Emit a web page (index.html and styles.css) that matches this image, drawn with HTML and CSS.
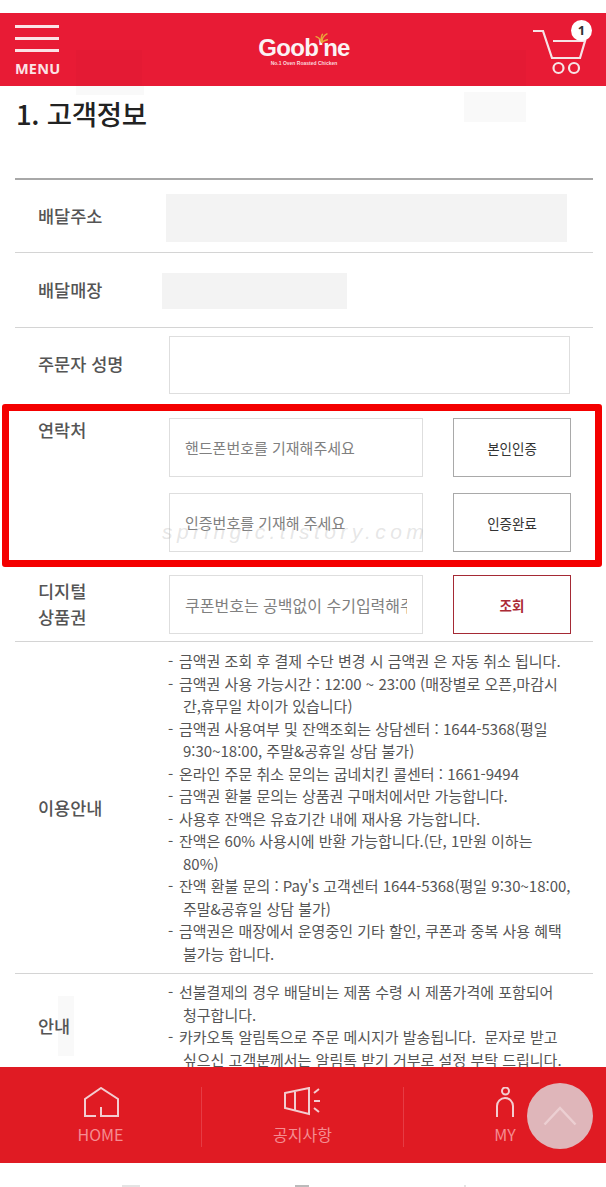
FILE: index.html
```html
<!DOCTYPE html>
<html lang="ko">
<head>
<meta charset="utf-8">
<title>Goobne</title>
<link rel="stylesheet" href="styles.css">
</head>
<body>
<div class="page">
  <span class="ghost ghost-a"></span>
  <span class="ghost ghost-b"></span>
  <span class="ghost ghost-c"></span>
  <header class="topbar">
    <span class="shade shade-a"></span>
    <span class="shade shade-b"></span>
    <div class="menu">
      <span class="bar"></span><span class="bar"></span><span class="bar"></span>
      <span class="menu-label">MENU</span>
    </div>
    <div class="logo">
      <svg class="leaf" width="13" height="10" viewBox="0 0 14 11"><path d="M7 10.5C6 7 4 5 1 4M7 10.5C7.500 6 9 3 13 1M7 8C6.500 5.500 7 3 8 1.500M7 10.500C9 9 11 8 13.500 7.500" fill="none" stroke="#e8a53a" stroke-width="1.600" stroke-linecap="round"/></svg>
      <span class="logo-name">Goob<span class="logo-i">'</span>ne</span>
      <span class="logo-sub">No.1 Oven Roasted Chicken</span>
    </div>
    <div class="cart">
      <svg width="56" height="56" viewBox="0 0 56 56"><path d="M0 9H10L19 36H47L52 19H20" fill="none" stroke="#f6e4e6" stroke-width="2.200"/><circle cx="25.500" cy="46" r="5" fill="none" stroke="#f6e4e6" stroke-width="2.200"/><circle cx="41" cy="46" r="5" fill="none" stroke="#f6e4e6" stroke-width="2.200"/></svg>
      <span class="badge">1</span>
    </div>
  </header>

  <main class="content">
    <h1 class="title">1. 고객정보</h1>
    <section class="form">
      <div class="row row-addr">
        <div class="label">배달주소</div>
        <div class="mask mask-addr"></div>
      </div>
      <div class="row row-store">
        <div class="label">배달매장</div>
        <div class="mask mask-store"></div>
      </div>
      <div class="row row-name">
        <div class="label">주문자 성명</div>
        <input class="field field-full" type="text">
      </div>
      <div class="row row-contact">
        <div class="label label-top">연락처</div>
        <div class="stack">
          <div class="pair">
            <input class="field" type="text" placeholder="핸드폰번호를 기재해주세요">
            <button class="btn" type="button">본인인증</button>
          </div>
          <div class="pair">
            <input class="field" type="text" placeholder="인증번호를 기재해 주세요">
            <button class="btn" type="button">인증완료</button>
          </div>
        </div>
      </div>
      <div class="row row-coupon">
        <div class="label label-two">디지털<br>상품권</div>
        <div class="pair">
          <input class="field field-lg" type="text" placeholder="쿠폰번호는 공백없이 수기입력해주세요">
          <button class="btn btn-red" type="button">조회</button>
        </div>
      </div>
      <div class="row row-info">
        <div class="label">이용안내</div>
        <ul class="notes">
          <li>금액권 조회 후 결제 수단 변경 시 금액권 은 자동 취소 됩니다.</li>
          <li>금액권 사용 가능시간 : 12:00 ~ 23:00 (매장별로 오픈,마감시간,휴무일 차이가 있습니다)</li>
          <li>금액권 사용여부 및 잔액조회는 상담센터 : 1644-5368(평일 9:30~18:00, 주말&amp;공휴일 상담 불가)</li>
          <li>온라인 주문 취소 문의는 굽네치킨 콜센터 : 1661-9494</li>
          <li>금액권 환불 문의는 상품권 구매처에서만 가능합니다.</li>
          <li>사용후 잔액은 유효기간 내에 재사용 가능합니다.</li>
          <li>잔액은 60% 사용시에 반환 가능합니다.(단, 1만원 이하는 80%)</li>
          <li>잔액 환불 문의 : Pay's 고객센터 1644-5368(평일 9:30~18:00, 주말&amp;공휴일 상담 불가)</li>
          <li>금액권은 매장에서 운영중인 기타 할인, 쿠폰과 중복 사용 혜택 불가능 합니다.</li>
        </ul>
      </div>
      <div class="row row-guide">
        <div class="label">안내</div>
        <ul class="notes">
          <li>선불결제의 경우 배달비는 제품 수령 시 제품가격에 포함되어 <span class="nb">청구합니다.</span></li>
          <li>카카오톡 알림톡으로 주문 메시지가 발송됩니다. &nbsp;문자로 받고 싶으신 고객분께서는 알림톡 받기 거부로 설정 부탁 드립니다.</li>
        </ul>
      </div>
    </section>
  </main>

  <nav class="tabbar">
    <a class="tab">
      <svg width="36" height="36" viewBox="0 0 36 36"><path d="M13 29H2V12L18 1L35 12V29H18V20" fill="none" stroke="#f3cdd0" stroke-width="2"/></svg>
      <span>HOME</span>
    </a>
    <a class="tab">
      <svg width="38" height="36" viewBox="0 0 38 36"><path d="M1 6L25 1V27L1 21ZM11 4V24" fill="none" stroke="#f3cdd0" stroke-width="2"/><path d="M30 6L35 2M30 14H36M30 21L35 25" fill="none" stroke="#f3cdd0" stroke-width="2"/></svg>
      <span>공지사항</span>
    </a>
    <a class="tab">
      <svg width="22" height="36" viewBox="0 0 22 36"><circle cx="11.500" cy="4" r="3.500" fill="none" stroke="#f3cdd0" stroke-width="2"/><path d="M3 30V19A8 8 0 0 1 19 19V30" fill="none" stroke="#f3cdd0" stroke-width="2"/></svg>
      <span>MY</span>
    </a>
  </nav>
  <div class="footer-strip"><span class="tick tick-a"></span><span class="tick tick-b"></span><span class="tick tick-c"></span></div>

  <div class="highlight"></div>
  <div class="watermark">springic.tistory.com</div>
  <button class="to-top" type="button" aria-label="위로">
    <svg width="34" height="20" viewBox="0 0 34 20"><path d="M1.500 18.500L17 2L32.500 18.500" fill="none" stroke="#eccfd2" stroke-width="2.500"/></svg>
  </button>
</div>
</body>
</html>
```
FILE: styles.css
```css
* { box-sizing: border-box; }
html, body { margin: 0; padding: 0; background: #fff; }
body { font-family: "Noto Sans CJK KR", "Noto Sans", sans-serif; color: #333; }

.page {
  position: relative;
  width: 606px;
  height: 1187px;
  padding-top: 13px;
  display: flex;
  flex-direction: column;
  overflow: hidden;
}

/* header */
.topbar {
  flex: 0 0 73px;
  background: #e81b35;
  display: flex;
  justify-content: space-between;
  align-items: flex-start;
  padding: 0 19px 0 15px;
  position: relative;
  z-index: 2;
}
.shade { position: absolute; top: 37px; height: 36px; background: rgba(120, 0, 20, 0.03); }
.shade-a { left: 76px; width: 66px; }
.shade-b { left: 460px; width: 66px; }
.menu { position: relative; width: 44px; padding-top: 12px; display: flex; flex-direction: column; gap: 9px; }
.bar { display: block; height: 3px; background: #fbe3e6; }
.menu-label {
  font-family: "Noto Sans", sans-serif;
  font-weight: 700;
  font-size: 14.500px;
  line-height: 16px;
  color: #fbe3e6;
  margin-top: -1px;
  letter-spacing: 0.200px;
  white-space: nowrap;
}
.logo {
  position: absolute;
  left: 258px;
  top: 22px;
  width: 92px;
  text-align: center;
  color: #fbf3f4;
}
.leaf { position: absolute; left: 57px; top: -2px; }
.logo-name {
  display: block;
  font-family: "Liberation Sans", sans-serif;
  font-weight: 700;
  font-size: 24px;
  line-height: 25px;
  letter-spacing: -0.700px;
  white-space: nowrap;
}
.logo-i { font-weight: 700; }
.logo-sub {
  display: block;
  font-family: "Liberation Sans", sans-serif;
  font-weight: 700;
  font-size: 5px;
  line-height: 7px;
  color: #fbd9dd;
  white-space: nowrap;
}
.cart { position: relative; width: 54px; height: 60px; margin-top: 9px; }
.cart svg { display: block; }
.badge {
  position: absolute;
  left: 38px;
  top: -2px;
  width: 21px;
  height: 21px;
  border-radius: 50%;
  background: #fff;
  color: #333;
  font-family: "Noto Sans", sans-serif;
  font-weight: 700;
  font-size: 13px;
  line-height: 21px;
  text-align: center;
}

/* content */
.content { position: relative; flex: 1 1 0; min-height: 0; overflow: hidden; padding: 0 13px 0 15px; }
.title {
  margin: 0;
  height: 92px;
  padding: 7px 0 0 1px;
  font-size: 27.500px;
  line-height: 40px;
  font-weight: 500;
  color: #222;
  letter-spacing: -0.300px;
}
.form { border-top: 2px solid #a8a8a8; }
.row {
  display: grid;
  grid-template-columns: 154px 1fr;
  align-items: center;
  border-bottom: 1px solid #d4d4d4;
}
.row-addr { height: 73px; }
.row-store { height: 75px; }
.row-name { height: 76px; align-items: start; padding-top: 8px; border-bottom: 0; }
.row-contact { height: 164px; align-items: start; padding-top: 14px; border-bottom: 0; }
.row-coupon { height: 74px; align-items: start; padding-top: 7px; }
.row-info { height: 332px; }
.row-guide { align-items: start; padding-top: 7px; border-bottom: 0; }

.label {
  padding-left: 23px;
  font-size: 17.500px;
  line-height: 26px;
  font-weight: 500;
  color: #555;
  white-space: nowrap;
}
.row-name .label { padding-top: 15px; }
.row-guide .label { padding-top: 32px; }
.label-top { margin-top: -1px; }
.label-two { line-height: 26px; margin-top: 3px; }

.mask { background: #f3f3f3; }
.mask-addr { width: 401px; height: 48px; margin-left: -3px; margin-top: 4px; }
.mask-store { width: 185px; height: 36px; margin-left: -7px; margin-top: 1px; }

.stack { display: flex; flex-direction: column; gap: 16px; }
.pair { display: flex; gap: 30px; }
.field {
  width: 254px;
  height: 59px;
  border: 1px solid #dedede;
  background: #fff;
  padding: 0 15px;
  font-family: inherit;
  font-size: 15px;
  color: #777;
  outline: 0;
  border-radius: 0;
  display: block;
}
.field-lg { font-size: 16px; }
.field::placeholder { color: #808080; opacity: 1; }
.field-full { width: 401px; height: 58px; }
.btn {
  width: 118px;
  height: 59px;
  border: 1px solid #a9a9a9;
  background: #fff;
  font-family: inherit;
  font-size: 13.500px;
  font-weight: 400;
  color: #333;
  padding: 0;
  border-radius: 0;
}
.btn-red { border-color: #a52a35; color: #ab2a35; font-weight: 700; }

.notes {
  list-style: none;
  margin: 0 0 0 -1px;
  padding: 0 21px 0 0;
  font-size: 15px;
  line-height: 22.500px;
  color: #555;
}
.notes li { padding-left: 15px; text-indent: -15px; }
.notes li::before { content: "-"; display: inline-block; width: 11px; text-indent: 0; }
.nb { white-space: nowrap; }

/* bottom nav */
.tabbar {
  flex: 0 0 96px;
  background: #e01b23;
  display: grid;
  grid-template-columns: 202px 202px 202px;
  align-items: start;
  padding: 20px 0 0;
  position: relative;
  z-index: 2;
}
.tab {
  height: 60px;
  display: flex;
  flex-direction: column;
  align-items: center;
  color: #f58d92;
  font-size: 16px;
  line-height: 24px;
  border-right: 1px solid #e63c44;
}
.tab:last-child { border-right: 0; }
.tab svg { display: block; flex: 0 0 36px; }
.tab span { margin-top: -1px; }
.footer-strip {
  flex: 0 0 24px;
  display: flex;
  align-items: flex-end;
  padding-left: 122px;
  gap: 155px;
}
.tick { display: block; height: 2px; background: #e4e4e4; }
.tick-a { width: 18px; }
.tick-b { width: 14px; background: #bbb; }
.tick-c { width: 2px; }

/* overlays */
.highlight {
  position: absolute;
  left: 2px;
  top: 404px;
  width: 600px;
  height: 163px;
  border: 7px solid #f40000;
  border-radius: 3px;
}
.watermark {
  position: absolute;
  left: 162px;
  top: 517px;
  font-family: "Liberation Sans", sans-serif;
  font-style: italic;
  font-size: 21px;
  line-height: 30px;
  letter-spacing: 4.400px;
  color: rgba(170, 170, 170, 0.3);
  white-space: nowrap;
}
.to-top {
  position: absolute;
  left: 527px;
  top: 1083px;
  width: 66px;
  height: 66px;
  border: 0;
  border-radius: 50%;
  background: #dfb6ba;
  padding: 0;
  z-index: 3;
  display: flex;
  align-items: center;
  justify-content: center;
}
.ghost { position: absolute; background: #f9f9f9; }
.ghost-a { left: 76px; top: 86px; width: 68px; height: 9px; }
.ghost-b { left: 464px; top: 92px; width: 62px; height: 30px; }
.ghost-c { left: 58px; top: 996px; width: 16px; height: 60px; }
```
